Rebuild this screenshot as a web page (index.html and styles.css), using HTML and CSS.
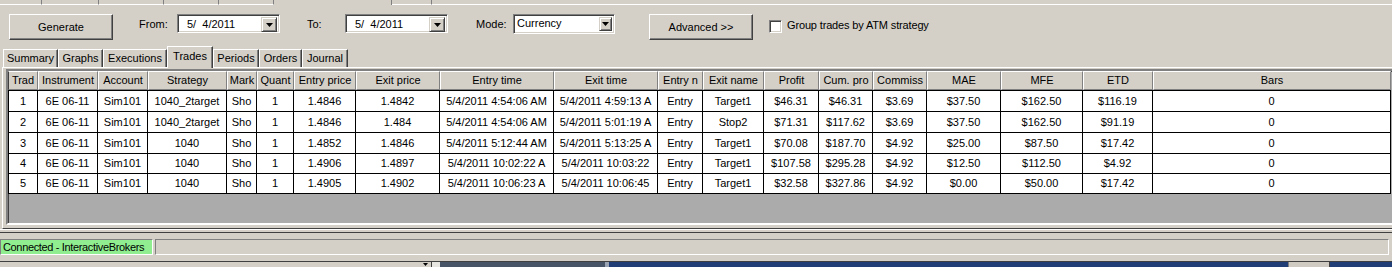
FILE: index.html
```html
<!DOCTYPE html>
<html lang="en">
<head>
  <meta charset="UTF-8">
  <title>Trade performance</title>
  <link rel="stylesheet" href="styles.css">
</head>
<body>
  <div class="strip">
    <span class="s1"></span><span class="s2"></span><span class="s3"></span><span class="s4"></span><span class="s5"></span><span class="gap"></span><span class="s6"></span><span class="rest"></span>
  </div>

  <div class="controls">
    <div class="btn gen">Generate</div>
    <div class="lbl from">From:</div>
    <div class="combo date"><span class="val">5/&nbsp; 4/2011</span><span class="drop"><svg width="7" height="4"><path d="M0 0h7L3.5 4z"/></svg></span></div>
    <div class="lbl to">To:</div>
    <div class="combo date"><span class="val">5/&nbsp; 4/2011</span><span class="drop"><svg width="7" height="4"><path d="M0 0h7L3.5 4z"/></svg></span></div>
    <div class="lbl mode">Mode:</div>
    <div class="combo list"><span class="val">Currency</span><span class="drop"><svg width="7" height="4"><path d="M0 0h7L3.5 4z"/></svg></span></div>
    <div class="btn adv">Advanced &gt;&gt;</div>
    <div class="check"></div>
    <div class="lbl chk">Group trades by ATM strategy</div>
  </div>

  <div class="tabs">
    <div class="tab w-sum">Summary</div>
    <div class="tab w-gra">Graphs</div>
    <div class="tab w-exe">Executions</div>
    <div class="tab active w-tra">Trades</div>
    <div class="tab w-per">Periods</div>
    <div class="tab w-ord">Orders</div>
    <div class="tab w-jou">Journal</div>
  </div>

  <div class="panel">
    <div class="grid">
      <div class="hdr">
        <div>Trad</div><div>Instrument</div><div>Account</div><div>Strategy</div><div>Mark</div><div>Quant</div><div>Entry price</div><div>Exit price</div><div>Entry time</div><div>Exit time</div><div>Entry n</div><div>Exit name</div><div>Profit</div><div>Cum. pro</div><div>Commiss</div><div>MAE</div><div>MFE</div><div>ETD</div><div>Bars</div>
      </div>
      <div class="rows">
        <div class="row">
          <div>1</div><div>6E 06-11</div><div>Sim101</div><div>1040_2target</div><div>Sho</div><div>1</div><div>1.4846</div><div>1.4842</div><div>5/4/2011 4:54:06 AM</div><div>5/4/2011 4:59:13 A</div><div>Entry</div><div>Target1</div><div>$46.31</div><div>$46.31</div><div>$3.69</div><div>$37.50</div><div>$162.50</div><div>$116.19</div><div>0</div>
        </div>
        <div class="row">
          <div>2</div><div>6E 06-11</div><div>Sim101</div><div>1040_2target</div><div>Sho</div><div>1</div><div>1.4846</div><div>1.484</div><div>5/4/2011 4:54:06 AM</div><div>5/4/2011 5:01:19 A</div><div>Entry</div><div>Stop2</div><div>$71.31</div><div>$117.62</div><div>$3.69</div><div>$37.50</div><div>$162.50</div><div>$91.19</div><div>0</div>
        </div>
        <div class="row">
          <div>3</div><div>6E 06-11</div><div>Sim101</div><div>1040</div><div>Sho</div><div>1</div><div>1.4852</div><div>1.4846</div><div>5/4/2011 5:12:44 AM</div><div>5/4/2011 5:13:25 A</div><div>Entry</div><div>Target1</div><div>$70.08</div><div>$187.70</div><div>$4.92</div><div>$25.00</div><div>$87.50</div><div>$17.42</div><div>0</div>
        </div>
        <div class="row short">
          <div>4</div><div>6E 06-11</div><div>Sim101</div><div>1040</div><div>Sho</div><div>1</div><div>1.4906</div><div>1.4897</div><div>5/4/2011 10:02:22 A</div><div>5/4/2011 10:03:22</div><div>Entry</div><div>Target1</div><div>$107.58</div><div>$295.28</div><div>$4.92</div><div>$12.50</div><div>$112.50</div><div>$4.92</div><div>0</div>
        </div>
        <div class="row short">
          <div>5</div><div>6E 06-11</div><div>Sim101</div><div>1040</div><div>Sho</div><div>1</div><div>1.4905</div><div>1.4902</div><div>5/4/2011 10:06:23 A</div><div>5/4/2011 10:06:45</div><div>Entry</div><div>Target1</div><div>$32.58</div><div>$327.86</div><div>$4.92</div><div>$0.00</div><div>$50.00</div><div>$17.42</div><div>0</div>
        </div>
      </div>
    </div>
  </div>

  <div class="split"></div>

  <div class="status">
    <div class="conn">Connected - InteractiveBrokers</div>
    <div class="info"></div>
  </div>

  <div class="desk">
    <span class="d-gray"></span><span class="d-arrow"><svg width="5" height="3"><path d="M0 0h5L2.5 3z"/></svg></span><span class="d-edge"></span><span class="d-slate"></span><span class="d-line"></span><span class="d-navy"></span><span class="d-win"></span><span class="d-navy2"></span>
  </div>
</body>
</html>
```

FILE: styles.css
```css
*{
  margin: 0;
  padding: 0;
  box-sizing: border-box;
}
html, body{
  width: 1392px;
  height: 267px;
  overflow: hidden;
}
body{
  background-color: #d4d0c8;
  font-family: "Liberation Sans", Arial, sans-serif;
  font-size: 11px;
  color: #000;
}

/* cut-off tabs of the window above */
.strip{
  display: flex;
  height: 5px;
}
.strip span{
  border-right: 1px solid #808080;
  border-bottom: 1px solid #fff;
}
.strip .s1{ width: 42px; }
.strip .s2{ width: 57px; }
.strip .s3{ width: 65px; }
.strip .s4{ width: 55px; }
.strip .s5{ width: 55px; }
.strip .gap{ width: 118px; border-bottom: none; }
.strip .s6{ width: 40px; }
.strip .rest{ flex: 1; border-right: none; }

/* toolbar */
.controls{
  display: flex;
  align-items: flex-start;
  height: 41px;
  padding: 9px 0 0 9px;
}
.btn{
  width: 104px;
  height: 26px;
  line-height: 24px;
  text-align: center;
  border: 1px solid;
  border-color: #fff #404040 #404040 #fff;
  box-shadow: inset -1px -1px #808080;
}
.lbl{
  line-height: 21px;
}
.from{ margin-left: 26px; width: 38px; }
.to{ margin-left: 27px; width: 38px; }
.mode{ margin-left: 28px; width: 37px; }
.adv{ margin-left: 34px; }
.chk{ margin-left: 5px; line-height: 23px; letter-spacing: -0.15px; }
.combo{
  display: flex;
  justify-content: space-between;
  background-color: #fff;
  border: 1px solid;
  border-color: #808080 #fff #fff #808080;
  box-shadow: inset 1px 1px #404040, inset -1px -1px #d4d0c8;
  padding: 2px;
}
.combo.date{
  width: 103px;
  height: 19px;
}
.combo.list{
  width: 102px;
  height: 20px;
}
.combo .val{
  white-space: pre;
  line-height: 14px;
}
.combo.date .val{
  padding-left: 7px;
  line-height: 15px;
}
.combo.list .val{
  padding-left: 1px;
  line-height: 13px;
}
.drop{
  display: flex;
  align-items: center;
  justify-content: center;
  width: 16px;
  height: 15px;
  background-color: #d4d0c8;
  border: 1px solid;
  border-color: #d4d0c8 #404040 #404040 #d4d0c8;
  box-shadow: inset 1px 1px #fff, inset -1px -1px #808080;
}
.combo.list .drop{
  width: 13px;
  height: 14px;
}
.drop svg{
  display: block;
}
.check{
  margin: 6px 0 0 16px;
  width: 13px;
  height: 13px;
  background-color: #fff;
  border: 1px solid;
  border-color: #808080 #fff #fff #808080;
  box-shadow: inset 1px 1px #404040, inset -1px -1px #d4d0c8;
}

/* tab strip */
.tabs{
  display: flex;
  align-items: flex-end;
  height: 21px;
  padding-left: 3px;
}
.tab{
  height: 18px;
  line-height: 16px;
  text-align: center;
  white-space: nowrap;
  border-top: 1px solid #fff;
  border-left: 1px solid #fff;
  border-right: 1px solid #404040;
  box-shadow: inset -1px 0 #808080;
}
.tab.active{
  line-height: 18px;
  position: relative;
  margin-bottom: -1px;
  height: 22px;
  background-color: #d4d0c8;
}
.w-sum{ width: 55px; }
.w-gra{ width: 45px; }
.w-exe{ width: 64px; }
.w-tra{ width: 46px; }
.w-per{ width: 46px; }
.w-ord{ width: 43px; }
.w-jou{ width: 46px; }

/* tab page with the grid */
.panel{
  margin-left: 2px;
  padding: 1px 0 3px 3px;
  border-top: 1px solid #fff;
  border-left: 1px solid #fff;
  border-bottom: 1px solid #404040;
}
.grid{
  width: 1400px;
  height: 156px;
  background-color: #ababab;
  border: 2px solid;
  border-color: #808080 #fff #fff #808080;
  box-shadow: inset 1px 1px #404040;
}
.hdr, .row{
  display: grid;
  grid-template-columns: 30px 60px 50px 79px 30px 37px 62px 84px 114px 104px 45px 61px 55px 54px 54px 74px 82px 70px 238px;
}
.hdr div, .row div{
  white-space: nowrap;
  overflow: hidden;
  text-align: center;
}
.hdr div{
  height: 19px;
  line-height: 17px;
  background-color: #d4d0c8;
  border-top: 1px solid #fff;
  border-left: 1px solid #fff;
  border-right: 1px solid #808080;
  border-bottom: 1px solid #808080;
}
.hdr div:first-child{
  border-left: 1px solid #404040;
}
.rows{
  width: 1383px;
  border-top: 1px solid #000;
}
.row{
  height: 21px;
}
.row.short{
  height: 20px;
}
.row div{
  background-color: #fff;
  line-height: 20px;
  border-right: 1px solid #000;
  border-bottom: 1px solid #000;
}
.row.short div{
  line-height: 19px;
}
.row div:first-child{
  border-left: 1px solid #000;
}

/* splitter under the tab page */
.split{
  height: 4px;
  border-top: 1px solid #fff;
  border-bottom: 1px solid #404040;
}

/* status bar */
.status{
  display: flex;
  margin-top: 6px;
  height: 16px;
}
.conn, .info{
  border: 1px solid;
  border-color: #808080 #fff #fff #808080;
}
.conn{
  width: 153px;
  background-color: #90ee90;
  line-height: 14px;
  padding-left: 2px;
  white-space: nowrap;
  overflow: hidden;
  letter-spacing: -0.35px;
}
.info{
  width: 1234px;
  margin-left: 2px;
}

/* desktop behind the window */
.desk{
  display: flex;
  margin-top: 6px;
  height: 6px;
  border-top: 1px solid #404040;
}
.d-gray{ width: 420px; }
.d-arrow{
  width: 11px;
  display: flex;
  justify-content: center;
  padding-top: 1px;
}
.d-edge{
  width: 9px;
  border-left: 1px solid #404040;
  background-color: #e8e6e0;
}
.d-slate{ width: 165px; background-color: #475468; }
.d-line{ width: 4px; background-color: #9aa3b2; }
.d-navy{ width: 679px; background-color: #213f76; }
.d-win{
  width: 42px;
  background-color: #cfcbc3;
  border-left: 1px solid #808080;
  border-right: 1px solid #404040;
}
.d-navy2{ flex: 1; background-color: #213f76; }
```
